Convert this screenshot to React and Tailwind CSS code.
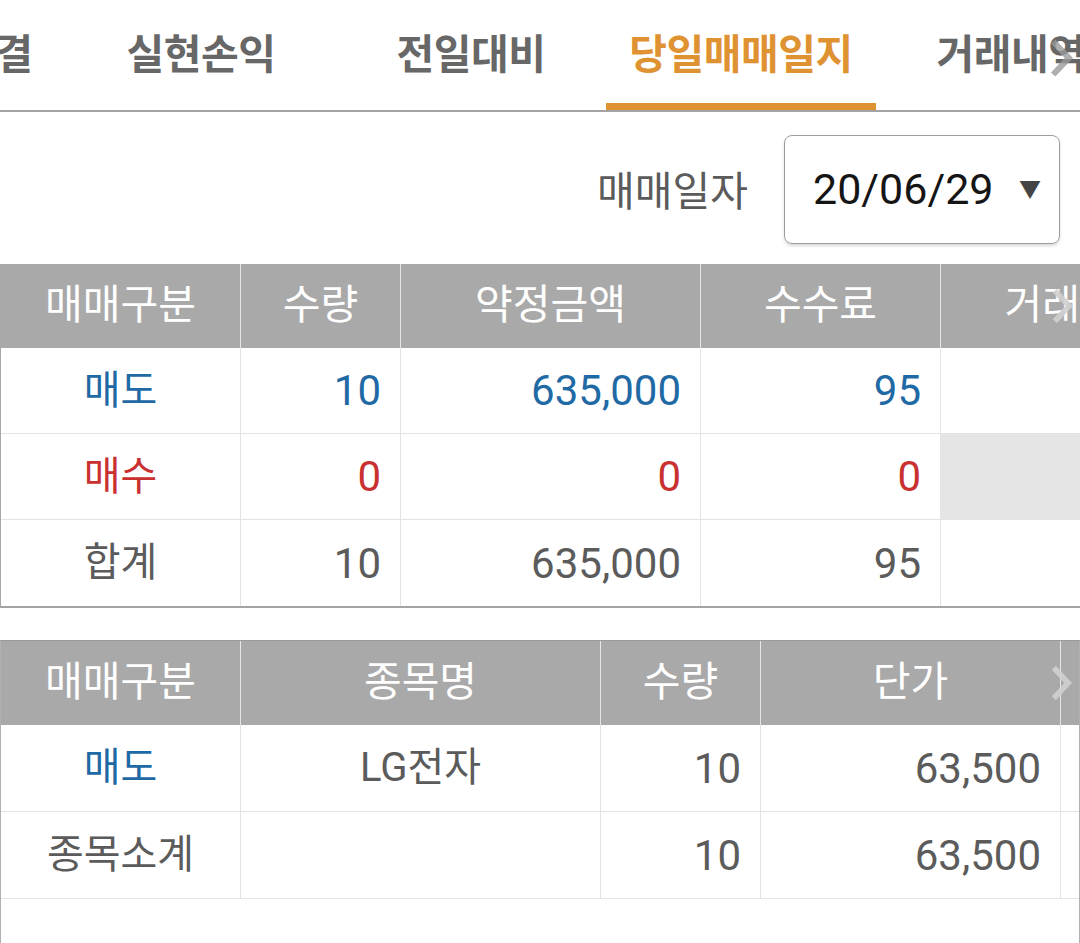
import { useState } from "react";

const tabs = ["주문체결", "실현손익", "전일대비", "당일매매일지", "거래내역"];

function Chevron({ className }) {
  return (
    <svg viewBox="0 0 30 46" className={className} fill="none">
      <path d="M6 4 L24 23 L6 42" stroke="currentColor" strokeWidth="7" strokeLinejoin="miter" />
    </svg>
  );
}

const summary = [
  { kind: "매도", color: "text-[#1f6aa5]", qty: "10", amt: "635,000", fee: "95", shade: false },
  { kind: "매수", color: "text-[#c93030]", qty: "0", amt: "0", fee: "0", shade: true },
  { kind: "합계", color: "text-[#5b5b5b]", qty: "10", amt: "635,000", fee: "95", shade: false },
];

const detail = [
  { kind: "매도", color: "text-[#1f6aa5]", name: "LG전자", qty: "10", price: "63,500" },
  { kind: "종목소계", color: "text-[#5b5b5b]", name: "", qty: "10", price: "63,500" },
];

const head = "flex items-center justify-center border-r border-[#e6e6e6] shrink-0";
const num = "flex items-center justify-end pr-[19px] border-r border-[#e3e3e3] shrink-0 text-[42px]";
const kindCell = "flex items-center justify-center border-r border-[#e3e3e3] shrink-0 text-[40px]";

export default function App() {
  const [active, setActive] = useState(3);

  return (
    <div
      className="w-[1080px] h-[943px] overflow-hidden bg-white text-[#5b5b5b]"
      style={{ fontFamily: "Roboto, 'Noto Sans CJK KR', sans-serif" }}
    >
      {/* tab strip */}
      <div className="relative h-[112px] border-b-2 border-[#a3a3a3] overflow-hidden">
        <div className="flex h-full ml-[-150px]">
          {tabs.map((t, i) => (
            <button
              key={t}
              onClick={() => setActive(i)}
              className={`relative shrink-0 h-full flex items-center justify-center pt-[2px] text-[41px] font-bold tracking-[-0.5px] ${
                i === 0 ? "w-[216px]" : "w-[270px]"
              } ${i === active ? "text-[#df9231]" : "text-[#676767]"}`}
            >
              {t}
              {i === active && (
                <span className="absolute left-0 right-0 bottom-[-2px] h-[9px] bg-[#df9231]" />
              )}
            </button>
          ))}
        </div>
        <Chevron className="absolute right-[6px] top-[36px] w-[26px] h-[44px] text-[#9a9a9a] opacity-80" />
      </div>

      {/* date */}
      <div className="flex items-center justify-end gap-[36px] pt-[23px] pr-[20px] pb-[20px]">
        <span className="text-[41px] text-[#5b5b5b] pt-[6px]">매매일자</span>
        <div className="w-[276px] h-[109px] rounded-[8px] border border-[#9c9c9c] shadow-[0_2px_3px_rgba(0,0,0,0.15)] flex items-center justify-between pl-[28px] pr-[18px]">
          <span className="text-[43px] text-[#151515]">20/06/29</span>
          <span className="text-[22px] text-[#444]">▼</span>
        </div>
      </div>

      {/* summary table */}
      <div className="relative border-l border-[#a8a8a8] border-b-2 border-b-[#a3a3a3] overflow-hidden">
        <div className="flex h-[84px] bg-[#a9a9a9] text-white text-[41px]">
          <div className={`${head} w-[240px]`}>매매구분</div>
          <div className={`${head} w-[160px]`}>수량</div>
          <div className={`${head} w-[300px]`}>약정금액</div>
          <div className={`${head} w-[240px]`}>수수료</div>
          <div className="w-[240px] shrink-0 flex items-center justify-center">거래세</div>
        </div>
        {summary.map((r, i) => (
          <div key={r.kind} className={`flex h-[86px] ${i < 2 ? "border-b border-[#e3e3e3]" : ""}`}>
            <div className={`${kindCell} w-[240px] ${r.color}`}>{r.kind}</div>
            <div className={`${num} w-[160px] ${r.color}`}>{r.qty}</div>
            <div className={`${num} w-[300px] ${r.color}`}>{r.amt}</div>
            <div className={`${num} w-[240px] ${r.color}`}>{r.fee}</div>
            <div className={`w-[240px] shrink-0 ${r.shade ? "bg-[#e5e5e5]" : ""}`} />
          </div>
        ))}
        <Chevron className="absolute right-[6px] top-[22px] w-[24px] h-[40px] text-[#d0d0d0] opacity-90" />
      </div>

      {/* detail table */}
      <div className="relative mt-[32px] h-[303px] border-l border-r border-[#b0b0b0] border-t border-t-[#9a9a9a] overflow-hidden">
        <div className="flex h-[84px] bg-[#a9a9a9] text-white text-[41px]">
          <div className={`${head} w-[240px]`}>매매구분</div>
          <div className={`${head} w-[360px]`}>종목명</div>
          <div className={`${head} w-[160px]`}>수량</div>
          <div className={`${head} w-[300px]`}>단가</div>
          <div className="flex-1" />
        </div>
        {detail.map((r) => (
          <div key={r.kind} className="flex h-[87px] border-b border-[#e3e3e3]">
            <div className={`${kindCell} w-[240px] ${r.color}`}>{r.kind}</div>
            <div className={`${kindCell} w-[360px]`}>{r.name}</div>
            <div className={`${num} w-[160px]`}>{r.qty}</div>
            <div className={`${num} w-[300px]`}>{r.price}</div>
            <div className="flex-1" />
          </div>
        ))}
        <Chevron className="absolute right-[6px] top-[22px] w-[24px] h-[40px] text-[#d0d0d0] opacity-90" />
      </div>
    </div>
  );
}
